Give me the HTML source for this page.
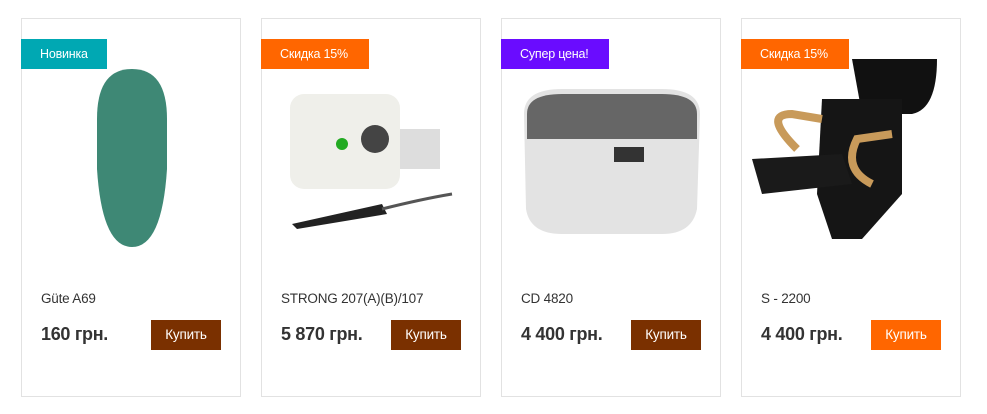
<!DOCTYPE html>
<html><head><meta charset="utf-8"><style>
body{margin:0;width:987px;height:414px;background:#fff;font-family:"Liberation Sans",sans-serif;position:relative;overflow:hidden}
.card{position:absolute;top:18px;width:220px;height:379px;border:1px solid #e2e2e2;box-sizing:border-box}
.badge{position:absolute;left:-1px;top:20px;height:30px;line-height:30px;color:#fff;font-size:12.5px;padding-left:19px;box-sizing:border-box;z-index:2;white-space:nowrap;letter-spacing:-0.2px}
.name{position:absolute;left:19px;top:272px;font-size:13.5px;color:#333;letter-spacing:-0.2px}
.price{position:absolute;left:19px;top:305px;font-size:18px;font-weight:bold;color:#333;letter-spacing:-0.3px}
.btn{position:absolute;left:129px;top:301px;width:70px;height:30px;line-height:30px;text-align:center;color:#fff;font-size:13.5px;background:#7a3000;letter-spacing:-0.2px}
svg{position:absolute;left:0;top:0}
</style></head><body>
<div class="card" style="left:21px">
<div class="badge" style="background:#00a8b3;width:86px">Новинка</div>
<svg width="219" height="240"><path d="M75 100 Q75 50 110 50 Q145 50 145 100 L145 150 Q140 228 110 228 Q80 228 75 150Z" fill="#3e8875"/></svg>
<div class="name">Güte A69</div><div class="price">160 грн.</div><div class="btn">Купить</div></div>
<div class="card" style="left:261px">
<div class="badge" style="background:#ff6600;width:108px">Скидка 15%</div>
<svg width="219" height="240"><rect x="28" y="75" width="110" height="95" rx="14" fill="#efefea"/><circle cx="113" cy="120" r="14" fill="#444"/><circle cx="80" cy="125" r="6" fill="#2a2"/><rect x="138" y="110" width="40" height="40" fill="#ddd"/><path d="M30 205 L120 185 L125 195 L35 210Z" fill="#222"/><path d="M120 190 Q160 180 190 175" stroke="#555" stroke-width="3" fill="none"/></svg>
<div class="name">STRONG 207(A)(B)/107</div><div class="price">5 870 грн.</div><div class="btn">Купить</div></div>
<div class="card" style="left:501px">
<div class="badge" style="background:#6a0cff;width:108px">Супер цена!</div>
<svg width="219" height="240"><path d="M22 95 Q22 70 60 70 L160 70 Q198 70 198 95 L195 190 Q190 215 160 215 L60 215 Q28 215 24 190Z" fill="#e3e3e3"/><path d="M25 95 Q25 75 60 75 L160 75 Q195 75 195 95 L195 120 L25 120Z" fill="#666"/><rect x="112" y="128" width="30" height="15" fill="#333"/></svg>
<div class="name">CD 4820</div><div class="price">4 400 грн.</div><div class="btn">Купить</div></div>
<div class="card" style="left:741px">
<div class="badge" style="background:#ff6600;width:108px">Скидка 15%</div>
<svg width="219" height="240"><path d="M110 40 L195 40 Q195 90 170 95 L120 95Z" fill="#111"/><path d="M80 80 L160 80 L160 175 L120 220 L90 220 L75 175Z" fill="#151515"/><path d="M10 140 L100 135 L110 165 L20 175Z" fill="#1a1a1a"/><path d="M55 130 Q20 95 50 95 L80 100" stroke="#c89a5a" stroke-width="8" fill="none"/><path d="M130 165 Q100 150 115 120 L150 115" stroke="#c89a5a" stroke-width="8" fill="none"/></svg>
<div class="name">S - 2200</div><div class="price">4 400 грн.</div><div class="btn" style="background:#ff6600">Купить</div></div>
</body></html>
